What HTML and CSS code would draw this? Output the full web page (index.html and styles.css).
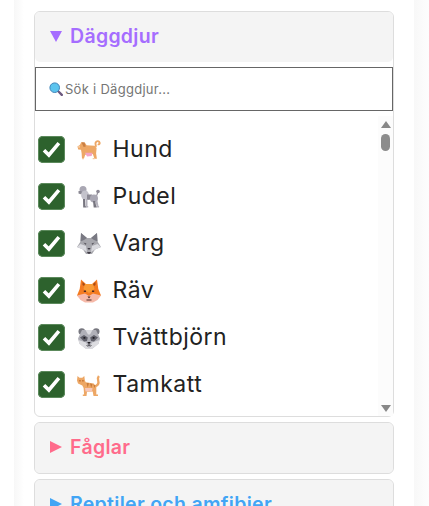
FILE: index.html
```html
<!DOCTYPE html>
<html lang="sv">
<head>
<meta charset="utf-8">
<title>Djur</title>
<link rel="stylesheet" href="styles.css">
</head>
<body>
<svg class="defs" aria-hidden="true">
  <symbol id="tick" viewBox="0 0 27 27"><path d="M6 14.200l4.900 4.800 10-11.800"/></symbol>
  <symbol id="dog" viewBox="0 0 24 24">
    <path fill="#eda765" d="M.5 8.500 3 6.800l1.200-2.600 3.600.4 1.800 2.600 8 .5 2 2.500-.5 5.300.8 5.200h-2.400l-1.700-4.600-7.600.6-1.300 4H5l-.4-5.600-.6-3.400-2.800-.3z"/>
    <path fill="none" stroke="#eda765" stroke-width="1.900" d="M18.600 9c.9-1.800-.8-2.700.1-4.500 1-2 3.700-1.600 4 .3.2 1.200-1 1.900-1.900 1.400"/>
    <path fill="#f4a4c4" d="M8 14.800h7.500l-.8 3.200-4.700.5z"/>
    <path fill="#c97f44" d="M4.500 4.300 7.500 4.500 8.800 8.500 6.600 9z"/>
    <path fill="#f6c99d" d="M5 20h2v1.300H5zM15.700 20h2v1.300h-2zM.5 8.500 3 7.500v2.300l-2-.4z"/>
  </symbol>
  <symbol id="poodle" viewBox="0 0 24 24">
    <circle cx="21" cy="6.500" r="1.800" fill="#8d8a96"/>
    <path fill="none" stroke="#8d8a96" stroke-width="1.200" d="M20.500 8c-.2 1.700-.7 2.600-1.700 3.500"/>
    <ellipse cx="6" cy="4.500" rx="3.500" ry="3.500" fill="#a9a7b3"/>
    <path fill="#8b8994" d="M1.500 6h3l.7 2.500-1.500.8-2.200-.7z"/>
    <ellipse cx="8" cy="10" rx="3.900" ry="4.500" fill="#c4c3cc"/>
    <path fill="#8b8994" d="M10 9.500h5v5l-5 .5z"/>
    <ellipse cx="17" cy="13.500" rx="4" ry="4" fill="#aaa8b4"/>
    <path fill="#77757f" d="M6 14h2l.4 7h.9v1.500H6.200zM16 16h2.300l.8 5h.6v1.500h-3z"/>
    <path fill="#b5b3bd" d="M8.500 14h2v7h.7v1.500H8.700zM18.500 16h2l1 5h.6v1.500h-2.500z"/>
  </symbol>
  <symbol id="wolf" viewBox="0 0 24 24">
    <path fill="#a8a8ae" d="M4 1l6 5h4l6-5 .5 8.500L24 15l-6 2.500-3 4.500H9l-3-4.500L0 15l3.500-5.500z"/>
    <path fill="#797983" d="M4 1l6 5-3 2-3.500 1.500zM20 1l-6 5 3 2 3.500 1.500z"/>
    <path fill="#d9d9de" d="M3.500 12 9 14l1 6-4-2.500L0 15zM20.500 12 15 14l-1 6 4-2.500 6-2.500z"/>
    <path fill="#413d46" d="M6.500 10.500l3 1.300-.8 1zM17.500 10.500l-3 1.300.8 1zM10.300 16h3.400L12 18zM10 20h4l-1 1.800h-2z"/>
  </symbol>
  <symbol id="fox" viewBox="0 0 24 24">
    <path fill="#f47b20" d="M4 .5 9 5h6l5-4.500 1.300 9.500L24 16.500 18 21H6l-6-4.500L2.700 10z"/>
    <path fill="#a84a14" d="M5.500 3 8.500 5.500 7 7 5.500 6zM18.500 3 15.500 5.500 17 7l1.500-1z"/>
    <path fill="#f99c35" d="M8 5h8l1.500 5-5.500 4-5.500-4z"/>
    <path fill="#f6b9a8" d="M0 16.500 8 14.500l4 2.500 4-2.500 8 2-3.500 4.500-4.500 2.500H8L3.500 21z"/>
    <path fill="#4a2a24" d="M6.800 11.500H9v1.600H6.800zM15 11.500h2.200v1.600H15zM10.500 17.500h3L12 19.500zM9.500 20.500h5v1h-5z"/>
  </symbol>
  <symbol id="raccoon" viewBox="0 0 24 24">
    <circle cx="4.800" cy="5.500" r="3.300" fill="#77777f"/>
    <circle cx="19.200" cy="5.500" r="3.300" fill="#77777f"/>
    <path fill="#b0b0b8" d="M5 4h14l4 8.500-1.500 5-6 5h-7l-6-5L1 12.500z"/>
    <path fill="#dcdce0" d="M8.500 4h7l-2.500 4.500h-2zM1.500 14 9 16.500l3 6H8.500l-6-4.500zM22.500 14 15 16.500l-3 6h3.500l6-4.500z"/>
    <path fill="#5f5f69" d="M3 11.500 7 9l3.800 2.500-.8 3.500-3 .5zM21 11.500 17 9l-3.800 2.500.8 3.500 3 .5z"/>
    <path fill="#1f1d22" d="M6.500 11h1.800v1.800H6.500zM15.700 11h1.800v1.800h-1.800zM10.200 16h3.600L12 18.200z"/>
    <path fill="none" stroke="#2a282e" stroke-width=".8" d="M9.500 19.500c1 .9 1.800.7 2.500-1 .7 1.700 1.500 1.900 2.500 1"/>
  </symbol>
  <symbol id="cat" viewBox="0 0 24 24">
    <path fill="#eda765" d="M.5 3l2 1.800h2.800L7.300 3l.6 4.500.8 1.700 8 1.300 2.600 3.500v7.400h1.700V23h-4.500l-.8-4.500-5.700.2-.5 4.300H5.800v-1.500h1.300l-.5-6.500-1.300-2.500L1 10.500 0 7.500z"/>
    <path fill="none" stroke="#eda765" stroke-width="2.300" d="M18 13.500c2.800-1.200 4-3.500 3.200-6-.5-1.500-.5-3 .7-4.500"/>
    <path fill="#c97b3a" d="M9.500 10l1.200 4.500 1.300-4.200zM13 10.500l1.200 4.500 1.300-4zM16.500 11.500l.8 3.500 1.200-2.500zM2 7h1.800v1.500H2zM5 7h1.800v1.500H5z"/>
    <path fill="#f6c7ba" d="M8 15h7.500l-.5 3.500H8.500z"/>
  </symbol>
</svg>
<main class="page">
  <section class="group open">
    <header class="group-head mammals"><span class="arrow down"></span>Däggdjur</header>
    <div class="search">
      <svg class="lens" viewBox="0 0 14 14"><path class="lens-grip" d="M9.500 9.500l3.300 3.300"/><circle class="lens-glass" cx="5.700" cy="5.700" r="4.800"/></svg>
      <span class="ph">Sök i Däggdjur...</span>
    </div>
    <div class="list">
      <ul class="rows">
        <li class="row"><svg class="check"><use href="#tick"/></svg><svg class="emoji"><use href="#dog"/></svg><span class="name">Hund</span></li>
        <li class="row"><svg class="check"><use href="#tick"/></svg><svg class="emoji"><use href="#poodle"/></svg><span class="name">Pudel</span></li>
        <li class="row"><svg class="check"><use href="#tick"/></svg><svg class="emoji"><use href="#wolf"/></svg><span class="name">Varg</span></li>
        <li class="row"><svg class="check"><use href="#tick"/></svg><svg class="emoji"><use href="#fox"/></svg><span class="name">Räv</span></li>
        <li class="row"><svg class="check"><use href="#tick"/></svg><svg class="emoji"><use href="#raccoon"/></svg><span class="name">Tvättbjörn</span></li>
        <li class="row"><svg class="check"><use href="#tick"/></svg><svg class="emoji"><use href="#cat"/></svg><span class="name">Tamkatt</span></li>
      </ul>
      <div class="bar"><span class="up"></span><span class="thumb"></span><span class="gap"></span><span class="dn"></span></div>
    </div>
  </section>
  <section class="group">
    <header class="group-head birds"><span class="arrow right"></span>Fåglar</header>
  </section>
  <section class="group">
    <header class="group-head reptiles"><span class="arrow right"></span>Reptiler och amfibier</header>
  </section>
</main>
</body>
</html>
```
FILE: styles.css
```css
* { box-sizing: border-box; }
html, body { margin: 0; height: 506px; overflow: hidden; }
body {
  font-family: Inter, "Open Sans", sans-serif; color: #222;
  background: linear-gradient(90deg, #fff 414px, #f8f8f8 414px, #fdfdfd 429px);
}
.defs { display: none; }
.page {
  width: 400px; height: 506px; margin-left: 14px; padding: 11px 20px 0;
  background: linear-gradient(90deg, #f7f7f7, #fff 10px);
  display: flex; flex-direction: column; gap: 5px;
}
.group { border: 1px solid #ddd; border-radius: 6px; background: #f4f4f4; flex: none; }
.group.open { background: #fff; }
.group-head {
  height: 50px; padding: 0 0 2px 15px; display: flex; align-items: center; gap: 8px;
  font-size: 19.5px; font-weight: 600; letter-spacing: .3px; background: #f4f4f4; border-radius: 5px;
}
.mammals { color: #a56dff; }
.birds { color: #ff6b8b; }
.reptiles { color: #42a5f5; }
.arrow { width: 0; height: 0; flex: none; }
.arrow.down { border-style: solid; border-color: currentColor transparent transparent; border-width: 11px 6px 0; }
.arrow.right { border-style: solid; border-color: transparent transparent transparent currentColor; border-width: 6.5px 0 6.5px 12px; }
.search {
  height: 44px; margin-top: 5px; border: 1px solid #666; background: #fff;
  display: flex; align-items: center; gap: 2px; padding: 0 0 1px 13px;
  font-size: 13px; letter-spacing: .28px; color: #757575;
}
.lens { width: 14px; height: 14px; flex: none; }
.lens-grip { stroke: #6d5a80; stroke-width: 2.4; stroke-linecap: round; fill: none; }
.lens-glass { fill: #5cc4ee; stroke: #3f83b8; stroke-width: 1; }
.list { height: 300px; margin-top: 5px; display: flex; }
.rows { list-style: none; margin: 0; padding: 20px 0 0 3px; flex: 1; overflow: hidden; }
.row { height: 47px; display: flex; align-items: flex-start; }
.check { width: 27px; height: 27px; border-radius: 5px; background: #2d622d; box-shadow: inset 0 0 0 1px #5c8a5c; flex: none; fill: none; stroke: #fff; stroke-width: 3.6; }
.emoji { width: 24px; height: 24px; flex: none; margin: 1.5px 0 0 12px; }
.name { margin-left: 11.5px; font-size: 23px; font-weight: 400; letter-spacing: .5px; line-height: 27px; color: #222; }
.bar { width: 15px; background: #fcfcfc; display: flex; flex-direction: column; align-items: center; padding-top: 5px; }
.up { width: 0; height: 0; border-style: solid; border-color: transparent transparent #888; border-width: 0 5px 7px; }
.thumb { width: 9px; height: 17px; border-radius: 5px; background: #8c8c8c; margin-top: 6px; }
.gap { flex: 1; }
.dn { width: 0; height: 0; border-style: solid; border-color: #888 transparent transparent; border-width: 7px 5px 0; margin-bottom: 4px; }
```
